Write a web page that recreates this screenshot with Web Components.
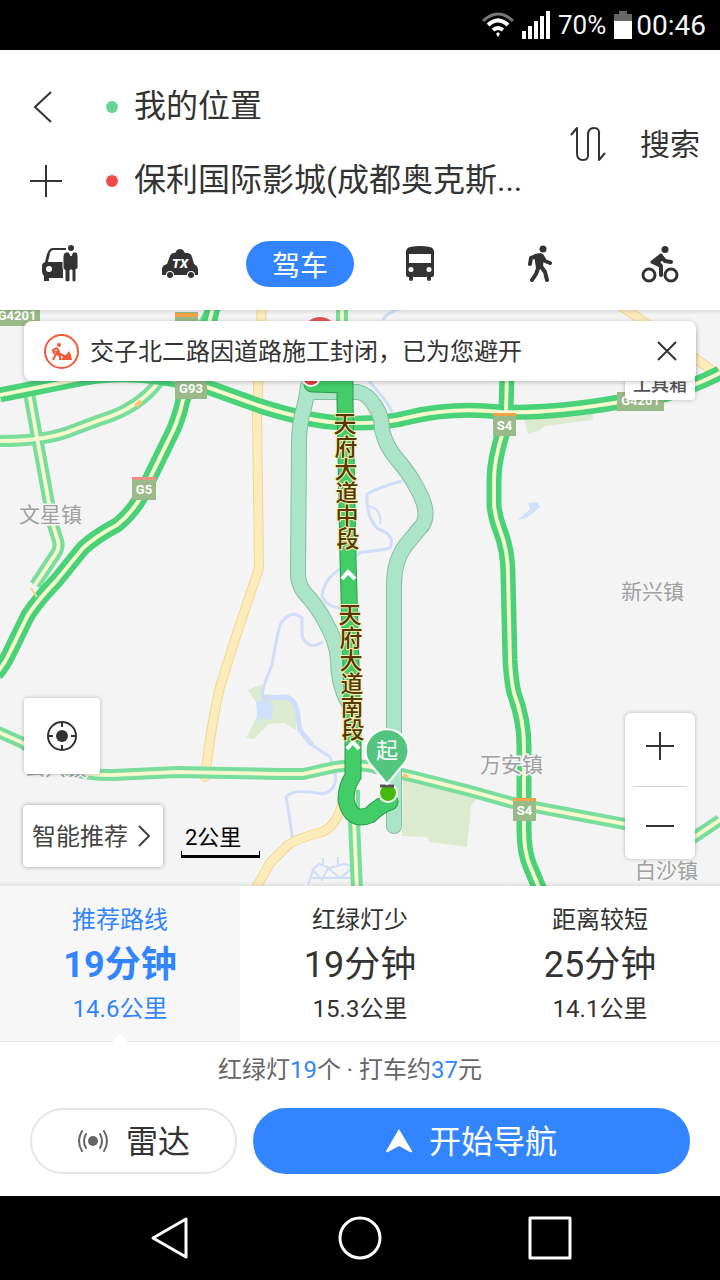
<!DOCTYPE html>
<html lang="zh-CN">
<head>
<meta charset="utf-8">
<meta name="viewport" content="width=device-width, initial-scale=1">
<title>驾车路线</title>
<style>
  html, body { margin: 0; }
  body {
    font-family: Roboto, "Noto Sans CJK SC", sans-serif;
    color: #333;
    background: #fff;
    --blue: #3385ff;
    --ink: #333;
  }
</style>
</head>
<body>
<nav-app>
  <status-bar slot="status" battery="70%" time="00:46"></status-bar>

  <route-header slot="header">
    <place-field slot="from" label="起点" value="我的位置" style="--dot:#67d596"></place-field>
    <place-field slot="to" label="终点" value="保利国际影城(成都奥克斯..." style="--dot:#f24b4b"></place-field>
    <mode-tab slot="modes" label="代驾">
      <svg width="36" height="38" viewBox="0 0 36 38"><path fill="#333" d="M7 5Q8 3 11 3H24V5H11Q9 5 8 8L6 17H21V33H7V36H2V31Q0 29 0 26V21Q0 18 3 17L5 9Z"/><circle cx="7" cy="24" r="3" fill="#fff"/><circle cx="29" cy="3" r="3" fill="#333"/><path fill="#333" stroke="#fff" stroke-width="1" d="M24 7H27L29 11L31 7H34Q36 8 36 11V23Q36 25 34 24V36Q32 38 30 36V25H28V36Q26 38 23 36V25Q21 25 21 23V11Q21 8 24 7Z"/></svg>
    </mode-tab>
    <mode-tab slot="modes" label="打车">
      <svg width="36" height="32" viewBox="0 0 36 32"><path fill="#333" d="M15 2Q18 0 21 2L23 5H25Q29 5 30 9L32 16Q36 18 36 22V27H33A4 4 0 0 0 25 27H12A4 4 0 0 0 4 27H0V20Q1 17 5 16L8 8Q9 5 12 5H13Z"/><circle cx="8" cy="27" r="3" fill="#333"/><circle cx="29" cy="27" r="3" fill="#333"/><text x="10" y="20" font-size="13" font-weight="900" font-style="italic" fill="#fff">TX</text></svg>
    </mode-tab>
    <mode-tab slot="modes" label="驾车" active><span>驾车</span></mode-tab>
    <mode-tab slot="modes" label="公交">
      <svg width="30" height="36" viewBox="0 0 30 36"><path fill="#333" fill-rule="evenodd" d="M1 6Q1 2 5 1Q15 -1 25 1Q29 2 29 6V29Q29 31 26 31V33Q26 35 24 35T22 33V31H8V33Q8 35 6 35T4 33V31Q1 31 1 29ZM4 8V17H26V8ZM6 21A2.500 2.500 0 1 0 6 26A2.500 2.500 0 1 0 6 21ZM24 21A2.500 2.500 0 1 0 24 26A2.500 2.500 0 1 0 24 21Z"/></svg>
    </mode-tab>
    <mode-tab slot="modes" label="步行">
      <svg width="26" height="38" viewBox="0 0 26 38" fill="none" stroke="#333" stroke-linecap="round" stroke-linejoin="round"><circle cx="16" cy="4" r="3.500" fill="#333" stroke="none"/><path fill="#333" stroke-width="2" d="M8 10L14 9L16 12L15 22L10 23Z"/><path stroke-width="4" d="M10 11L4 13L3 19M15 11L18 16L23 18M12 21L9 29L5 35M13 20L18 27L20 35"/></svg>
    </mode-tab>
    <mode-tab slot="modes" label="骑行">
      <svg width="38" height="38" viewBox="0 0 38 38" fill="none" stroke="#333" stroke-linecap="round" stroke-linejoin="round"><circle cx="24" cy="4.500" r="3.500" fill="#333" stroke="none"/><circle cx="8" cy="30" r="6" stroke-width="3"/><circle cx="30" cy="30" r="6" stroke-width="3"/><path fill="#333" stroke-width="3" d="M20 10L11 17L20 21L19 19L17 17L21 14Z"/><path stroke-width="4" d="M20 11L24 16L30 17M12 17L20 21L20 30"/></svg>
    </mode-tab>
  </route-header>

  <map-view slot="map">
    <notice-card slot="notice">交子北二路因道路施工封闭，已为您避开</notice-card>
    <tool-button slot="toolbox">工具箱</tool-button>
    <locate-button slot="left"></locate-button>
    <strategy-button slot="strategy">智能推荐</strategy-button>
    <scale-bar slot="strategy">2公里</scale-bar>
    <zoom-control slot="right"></zoom-control>
  </map-view>

  <route-options slot="options">
    <route-option name="推荐路线" time="19分钟" distance="14.6公里" selected></route-option>
    <route-option name="红绿灯少" time="19分钟" distance="15.3公里"></route-option>
    <route-option name="距离较短" time="25分钟" distance="14.1公里"></route-option>
  </route-options>

  <trip-summary slot="actions">红绿灯<b>19</b>个 · 打车约<b>37</b>元</trip-summary>
  <action-bar slot="actions">
    <pill-button>
      <svg slot="icon" width="32" height="24" viewBox="0 0 32 24" fill="none" stroke="#666" stroke-width="2" stroke-linecap="round"><circle cx="16" cy="12" r="5" fill="#666" stroke="none"/><path d="M9 5Q5 12 9 19M5 2Q-1 12 5 22M23 5Q27 12 23 19M27 2Q33 12 27 22"/></svg>
      雷达
    </pill-button>
    <pill-button primary>
      <svg slot="icon" width="26" height="24" viewBox="0 0 26 24"><path fill="#fff" d="M13 0L26 22Q26 24 24 23L13 17L2 23Q0 24 0 22Z"/></svg>
      开始导航
    </pill-button>
  </action-bar>

  <system-nav slot="system"></system-nav>
</nav-app>

<script>
  // Registers a custom element whose open shadow root is cloned from the given markup.
  const define = (name, render) => customElements.define(name, class extends HTMLElement {
    constructor() {
      super();
      const template = document.createElement('template');
      template.innerHTML = render(this);
      this.attachShadow({ mode: 'open' }).append(template.content.cloneNode(true));
    }
  });

  const buttonReset = 'button{appearance:none;border:0;margin:0;padding:0;background:none;font:inherit;color:inherit;cursor:pointer}svg{display:block}';

  define('nav-app', () => `
    <style>
      :host { display: flex; flex-direction: column; min-height: 100vh; }
      main { display: flex; flex-direction: column; flex: 1; }
      ::slotted(map-view) { flex: 1; }
    </style>
    <slot name="status"></slot>
    <slot name="header"></slot>
    <main><slot name="map"></slot><slot name="options"></slot><slot name="actions"></slot></main>
    <slot name="system"></slot>`);

  define('status-bar', el => `
    <style>
      :host { display: flex; align-items: center; justify-content: flex-end; height: 50px; padding-right: 14px; background: #000; color: #f4f4f4; }
      svg { display: block; }
      .signal { margin: 0 8px; }
      .battery { margin: 0 4px 0 8px; }
      .level { font-size: 26px; }
      .time { font-size: 28px; }
    </style>
    <svg width="32" height="26" viewBox="0 0 32 26" fill="none"><path stroke="#777" stroke-width="3" d="M1 9Q16 -5 31 9"/><path stroke="#fff" stroke-width="4" d="M6 13Q16 4 26 13"/><path stroke="#fff" stroke-width="4" d="M11 18Q16 14 21 18"/><path fill="#fff" d="M12 10L16 6L20 10ZM14 22L16 20L18 22L16 25Z"/></svg>
    <svg class="signal" width="28" height="28" viewBox="0 0 28 28" fill="#fff"><path d="M0 20h4v8h-4zM6 15h4v13h-4zM12 10h4v18h-4zM18 5h4v23h-4zM24 0h4v28h-4z"/></svg>
    <span class="level">${el.getAttribute('battery')}</span>
    <svg class="battery" width="18" height="28" viewBox="0 0 18 28"><path fill="#666" d="M5 0h8v3h5v8H0V3h5z"/><path fill="#fff" d="M0 10h18v18H0z"/></svg>
    <span class="time">${el.getAttribute('time')}</span>`);

  define('route-header', () => `
    <style>
      ${buttonReset}
      :host { display: block; padding-top: 20px; background: #fff; }
      .places { display: grid; grid-template-columns: 92px 1fr 64px 100px; grid-template-rows: 74px 74px; }
      .places > button { display: flex; align-items: center; justify-content: center; }
      .tall { grid-row: 1 / 3; }
      .swap { grid-column: 3; }
      .places > .search { grid-column: 4; padding-bottom: 4px; font-size: 30px; }
      .back, .add { grid-column: 1; }
      .from { grid-area: 1 / 2; min-width: 0; } .to { grid-area: 2 / 2; min-width: 0; }
      nav { display: grid; grid-template-columns: repeat(6, 1fr); align-items: center; height: 92px; }
    </style>
    <div class="places">
      <button class="back" aria-label="返回"><svg width="32" height="32" viewBox="0 0 32 32" fill="none" stroke="#333" stroke-width="2"><path d="M21 1L5 16L21 31"/></svg></button>
      <div class="from"><slot name="from"></slot></div>
      <button class="add" aria-label="添加途经点"><svg width="32" height="32" viewBox="0 0 32 32" stroke="#333" stroke-width="2"><path d="M0 16H32M16 0V32"/></svg></button>
      <div class="to"><slot name="to"></slot></div>
      <button class="swap tall" aria-label="交换起终点"><svg width="36" height="36" viewBox="0 0 36 36" fill="none" stroke="#333" stroke-width="2" stroke-linejoin="round"><path d="M1 9L7 2V27Q7 34 13 34T18 27V9Q18 2 24 2T29 9V34L35 27"/></svg></button>
      <button class="search tall">搜索</button>
    </div>
    <nav aria-label="出行方式"><slot name="modes"></slot></nav>`);

  define('place-field', el => `
    <style>
      :host { display: block; height: 100%; }
      label { display: flex; align-items: center; gap: 16px; height: 74px; padding-left: 14px; }
      i { flex: none; width: 12px; height: 12px; border-radius: 50%; background: var(--dot); }
      input { flex: 1; min-width: 0; border: 0; padding: 0 0 2px; outline: 0; background: none; font: inherit; font-size: 32px; line-height: 40px; height: 40px; color: var(--ink); text-overflow: ellipsis; }
    </style>
    <label><i></i><input type="text" aria-label="${el.getAttribute('label')}" value="${el.getAttribute('value')}"></label>`);

  define('mode-tab', el => `
    <style>
      ${buttonReset}
      :host { display: flex; justify-content: center; }
      button { display: flex; align-items: center; justify-content: center; width: 108px; height: 46px; border-radius: 23px; font-size: 28px; }
      :host([active]) button { background: var(--blue); color: #fff; }
    </style>
    <button aria-label="${el.getAttribute('label')}"><slot></slot></button>`);

  // ---- Map drawing -------------------------------------------------------
  const highways = [
    'M0 395L70 381Q130 366 207 387L260 406Q310 422 345 423Q385 424 410 417Q453 407 500 412Q550 414 620 402L664 395Q690 388 720 373',
    'M215 300Q205 340 191 382L183 400Q178 422 170 437L148 482Q138 508 117 525Q96 536 83 548L57 580Q38 600 28 615L10 652Q4 665 -4 674',
    'M507 370L506 412L503 432Q494 460 494 480V505Q495 517 500 530Q508 550 508 575L510 660Q511 680 514 693Q524 720 524 745V830Q524 852 530 866L540 890'];
  const roads = [
    'M0 441Q40 441 65 433L100 420Q140 408 160 380L205 322L214 306',
    'M29 393L38 443L53 525L58 541Q60 548 55 555L35 585',
    'M-4 731L23 743L60 768Q90 776 113 775L177 772L280 774H303L335 767Q350 764 367 766L415 777L470 791L513 803L625 824L690 840L720 820',
    'M354 790V820L357 890', 'M342 300V340'];
  const lanes = ['M262 300L257 413L259 568L237 633L220 687Q211 725 205 777', 'M345 790Q340 825 322 832Q298 838 288 845L270 863L255 890', 'M610 298L720 376'];
  const rivers = [
    'M312 745L330 757Q344 790 322 794Q293 788 286 797Q290 818 293 842',
    'M262 697Q262 688 272 665Q276 640 280 625Q290 608 302 618L302 636Q308 651 323 642',
    'M368 380Q388 402 392 412M402 481Q380 487 367 494Q366 518 378 529Q396 535 390 548Q378 551 362 552Q348 558 342 568Q324 578 322 596Q326 607 342 608',
    'M384 320Q382 315 402 308'];
  const draw = (list, color, width, cap = 'butt') => list.map(d => `<path d="${d}" stroke="${color}" stroke-width="${width}" stroke-linecap="${cap}"/>`).join('');
  const doubleRoad = (list, color, width) => draw(list, color, width) + draw(list, '#d5f3cd', 4) + draw(list, '#fbf8cb', 3);
  const altRoutes = ['M308 386Q306 402 302 415Q299 430 299 442L298 573Q298 584 304 592Q318 607 326 623Q337 642 338 660Q338 684 348 702', 'M313 392H358Q368 394 375 406Q382 415 382 430Q386 446 396 458Q410 474 418 490Q432 516 420 528L406 545Q394 560 394 585V826'];
  const mainRoute = ['M312 384L345 385V402L348 560L353 735V776Q346 786 346 800Q351 823 370 815Q380 805 390 802'];
  const badge = (x, y, w, text, top = '') => `<rect x="${x}" y="${y}" width="${w}" height="${top ? 23 : 19}" fill="#9aba8a"/>${top ? `<rect x="${x}" y="${y}" width="${w}" height="3" fill="${top}"/>` : ''}<text class="badge" x="${x + w / 2}" y="${y + (top ? 17 : 13)}">${text}</text>`;
  const vertical = (chars, x, y) => `<text class="street" x="${[...chars].map((c, i) => x + Math.round(i * 0.6)).join(' ')}" y="${[...chars].map((c, i) => y + i * 23).join(' ')}">${chars}</text>`;

  define('map-view', () => `
    <style>
      :host { display: block; position: relative; min-height: 576px; background: #f4f4f4; overflow: hidden; }
      .map { position: absolute; inset: 0; width: 100%; height: 100%; }
      .edge { position: absolute; inset: 0; background: linear-gradient(#0000001a, transparent 5px, transparent calc(100% - 5px), #00000012); }
      .town { font-size: 21px; fill: #a0a0a0; stroke: #f6f6f6; stroke-width: 3px; paint-order: stroke; }
      .street { font-size: 23px; font-weight: 500; fill: #573700; stroke: #f7f0b4; stroke-width: 2px; paint-order: stroke; text-anchor: middle; }
      .badge { font-size: 13px; font-weight: 700; fill: #fff; text-anchor: middle; }
      .start { font-size: 22px; fill: #fff; text-anchor: middle; }
      .overlay { position: absolute; inset: 0; display: flex; flex-direction: column; justify-content: space-between; padding: 11px 24px 19px; }
      .notice { position: relative; z-index: 1; }
      .toolbox { position: absolute; top: 20px; right: 25px; }
      .bottom { display: flex; justify-content: space-between; align-items: flex-end; }
      .left { display: flex; flex-direction: column; gap: 31px; }
      .row { display: flex; gap: 18px; align-items: flex-end; margin-left: -1px; }
      .right { padding: 0 1px 8px 0; }
    </style>
    <svg class="map" viewBox="0 310 720 576" preserveAspectRatio="xMidYMid slice" fill="none" role="img" aria-label="路线地图">
      <path fill="#dcebcf" d="M248 690L262 684L264 694L290 696L296 704V730L284 723L268 724L254 739L246 738L257 716V704ZM403 779L478 797L471 806L467 847L430 842L427 837L402 836ZM524 420L594 414L592 420L545 426L540 430L528 434Z"/>
      <path fill="#cfe0fb" d="M256 702L266 700L273 704L272 720L262 718L258 724ZM518 520L530 509L528 503L537 502L540 507L532 514L526 518Z"/>
      ${draw(rivers, '#cfddfa', 3)}
      <path stroke="#cfddfa" stroke-width="5" d="M262 698L286 697Q294 698 297 710L300 730L312 745"/>
      <path stroke="#cfddfa" stroke-width="2" d="M368 506Q382 508 380 524"/>
      <path stroke="#cfddfa" stroke-width="2" d="M308 885L313 870L322 880L328 868L340 878L350 870L355 884M312 870L319 864L330 868L344 864L352 866M323 858V866M338 857V866M310 878H352"/>
      ${draw(lanes, '#f4d68c', 10, 'round')}${draw(lanes, '#fdecbb', 8, 'round')}
      ${doubleRoad(roads, '#79dd9c', 12)}
      ${doubleRoad(highways, '#4ad279', 15)}
      <path stroke="#ffc36e" stroke-width="4" d="M136 406L141 401M403 775L408 777"/>
      <path stroke="#f5d78a" stroke-width="2" d="M31 588L37 597"/>
      ${draw(altRoutes, '#83bfa3', 16, 'round')}${draw(altRoutes, '#abe4c8', 14, 'round')}
      ${draw(mainRoute, '#2f9850', 17, 'round')}${draw(mainRoute, '#42cd69', 15, 'round')}
      <path stroke="#fff" stroke-width="4" d="M342 579L348 572L355 579M347 749L353 742L359 749"/>
      ${badge(-6, 307, 46, 'G4201')}${badge(175, 380, 32, 'G93')}
      ${badge(132, 477, 24, 'G5', '#ec8f86')}${badge(493, 413, 23, 'S4', '#f2a348')}${badge(513, 798, 23, 'S4', '#f2a348')}
      ${badge(617, 392, 47, 'G4201')}
      <path fill="#9aba8a" d="M175 312H198V325H175Z"/><path fill="#f2a348" d="M175 313H198V317H175Z"/>
      <circle cx="320" cy="334" r="17" fill="#e8525a"/><circle cx="311" cy="377" r="9" fill="#e5443c" stroke="#fff" stroke-width="2"/>
      ${vertical('天府大道中段', 345, 432)}${vertical('天府大道南段', 350, 623)}
      <text class="town" x="19" y="522">文星镇</text><text class="town" x="621" y="599">新兴镇</text>
      <text class="town" x="480" y="772">万安镇</text><text class="town" x="635" y="878">白沙镇</text>
      <text class="town" x="24" y="775">公兴镇</text>
      <circle cx="388" cy="793" r="9" fill="#46b90b" stroke="#fff" stroke-width="2"/><path stroke="#555" stroke-width="3" d="M380 786H394"/>
      <path fill="#54c57f" stroke="#fff" stroke-width="2" d="M387 784L371 765A21.500 21.500 0 1 1 403 765Z"/>
      <text class="start" x="387" y="758">起</text>
    </svg>
    <div class="edge"></div>
    <div class="toolbox"><slot name="toolbox"></slot></div>
    <div class="overlay">
      <div class="notice"><slot name="notice"></slot></div>
      <div class="bottom">
        <div class="left"><slot name="left"></slot><div class="row"><slot name="strategy"></slot></div></div>
        <div class="right"><slot name="right"></slot></div>
      </div>
    </div>`);

  define('notice-card', () => `
    <style>
      ${buttonReset}
      :host { display: flex; align-items: center; height: 60px; padding: 0 18px 0 20px; border-radius: 8px; background: #fff; box-shadow: 0 1px 5px #00000040; font-size: 24px; }
      p { flex: 1; margin: 0 0 4px 11px; white-space: nowrap; }
    </style>
    <svg width="35" height="35" viewBox="0 0 35 35" fill="none" stroke="#f2593a"><circle cx="17.500" cy="17.500" r="16.500" stroke-width="2"/><circle cx="15" cy="11" r="2" fill="#f2593a" stroke="none"/><path fill="#f2593a" stroke="none" d="M17 26L20 21L22 21L25 17L27 21L28 26Z"/><path stroke-width="2" d="M13 14L9 16L10 20M13 14L15 18L12 20L9 26M13 20L16 22V26M9 16L20 22"/></svg>
    <p><slot></slot></p>
    <button aria-label="关闭"><svg width="22" height="22" viewBox="0 0 22 22" stroke="#333" stroke-width="2"><path d="M2 2L20 20M20 2L2 20"/></svg></button>`);

  define('tool-button', () => `
    <style>
      ${buttonReset}
      button { display: flex; align-items: flex-end; justify-content: center; width: 70px; height: 70px; padding-bottom: 4px; border-radius: 4px; background: #fff; box-shadow: 0 0 4px #00000040; font-size: 18px; font-weight: 500; color: #555; }
    </style>
    <button><slot></slot></button>`);

  define('locate-button', () => `
    <style>
      ${buttonReset}
      button { display: flex; align-items: center; justify-content: center; width: 76px; height: 76px; border-radius: 4px; background: #fff; box-shadow: 0 0 4px #00000040; }
    </style>
    <button aria-label="定位"><svg width="30" height="30" viewBox="0 0 30 30" fill="none" stroke="#333" stroke-width="2"><circle cx="15" cy="15" r="14"/><circle cx="15" cy="15" r="6" fill="#333" stroke="none"/><path d="M15 1V6M15 24V29M1 15H6M24 15H29"/></svg></button>`);

  define('strategy-button', () => `
    <style>
      ${buttonReset}
      button { display: flex; align-items: center; gap: 10px; width: 140px; height: 62px; padding-left: 9px; border-radius: 4px; background: #fff; box-shadow: 0 0 4px #00000059; font-size: 24px; color: #444; }
      span { padding-bottom: 4px; }
    </style>
    <button><span><slot></slot></span><svg width="12" height="22" viewBox="0 0 12 22" fill="none" stroke="#444" stroke-width="2"><path d="M1 1L11 11L1 21"/></svg></button>`);

  define('scale-bar', () => `
    <style>
      :host { display: block; margin-bottom: 9px; width: 79px; font-size: 22px; line-height: 26px; color: #000; }
      span { display: block; padding: 0 4px; }
      i { display: block; height: 4px; border: solid #000; border-width: 0 1px 3px; }
    </style>
    <span><slot></slot></span><i></i>`);

  define('zoom-control', () => `
    <style>
      ${buttonReset}
      :host { display: flex; flex-direction: column; width: 70px; height: 146px; border-radius: 6px; background: #fff; box-shadow: 0 0 4px #00000040; }
      button { display: flex; flex: 1; align-items: center; justify-content: center; }
      hr { width: 54px; height: 1px; margin: 0 auto; border: 0; background: #d4d4d4; }
    </style>
    <button aria-label="放大"><svg width="28" height="40" viewBox="0 0 28 40" stroke="#333" stroke-width="2"><path d="M0 17H28M14 3V31"/></svg></button>
    <hr>
    <button aria-label="缩小"><svg width="28" height="40" viewBox="0 0 28 40" stroke="#333" stroke-width="2"><path d="M0 23H28"/></svg></button>`);

  // ---- Bottom sheet ------------------------------------------------------
  define('route-options', () => `
    <style>
      :host { display: grid; grid-template-columns: repeat(3, 1fr); border-bottom: 1px solid #e6e6e6; background: #fff; }
    </style>
    <slot></slot>`);

  define('route-option', el => `
    <style>
      ${buttonReset}
      :host { display: block; position: relative; color: var(--ink); }
      button { display: block; width: 100%; padding: 17px 0 16px; text-align: center; }
      span { display: block; font-size: 24px; line-height: 34px; }
      .time { font-size: 36px; line-height: 56px; }
      .distance { line-height: 32px; }
      :host([selected]) { background: #f7f7f7; color: var(--blue); }
      :host([selected]) .time { font-weight: 700; }
      :host([selected])::after { content: ""; position: absolute; left: 50%; bottom: -1px; width: 16px; height: 8px; transform: translateX(-50%); background: #fff; clip-path: polygon(50% 0, 100% 100%, 0 100%); }
    </style>
    <button><span>${el.getAttribute('name')}</span><span class="time">${el.getAttribute('time')}</span><span class="distance">${el.getAttribute('distance')}</span></button>`);

  define('trip-summary', () => `
    <style>
      :host { display: block; padding-right: 20px; text-align: center; font-size: 24px; line-height: 56px; color: #666; background: #fff; }
      ::slotted(b) { font-weight: 400; color: var(--blue); }
    </style>
    <slot></slot>`);

  define('action-bar', () => `
    <style>:host { display: grid; grid-template-columns: 9fr 19fr; gap: 16px; padding: 10px 30px 22px; background: #fff; }</style>
    <slot></slot>`);

  define('pill-button', () => `
    <style>
      ${buttonReset}
      :host { display: block; }
      button { box-sizing: border-box; display: flex; align-items: center; justify-content: center; gap: 17px; width: 100%; height: 66px; border: 2px solid #e6e6e6; border-radius: 33px; font-size: 32px; }
      span { padding-bottom: 4px; }
      :host([primary]) button { border-color: var(--blue); background: var(--blue); color: #fff; }
    </style>
    <button><slot name="icon"></slot><span><slot></slot></span></button>`);

  define('system-nav', () => `
    <style>
      ${buttonReset}
      :host { display: grid; grid-template-columns: repeat(3, 190px); justify-content: center; height: 84px; background: #000; }
      button { display: flex; align-items: center; justify-content: center; }
    </style>
    <button aria-label="返回"><svg width="44" height="44" viewBox="0 0 44 44" fill="none" stroke="#fff" stroke-width="3" stroke-linejoin="round"><path d="M38 3V41L5 22Z"/></svg></button>
    <button aria-label="主页"><svg width="44" height="44" viewBox="0 0 44 44" fill="none" stroke="#fff" stroke-width="3"><circle cx="22" cy="22" r="20"/></svg></button>
    <button aria-label="最近任务"><svg width="44" height="44" viewBox="0 0 44 44" fill="none" stroke="#fff" stroke-width="3" stroke-linejoin="round"><path d="M2 2H42V42H2Z"/></svg></button>`);
</script>
</body>
</html>
